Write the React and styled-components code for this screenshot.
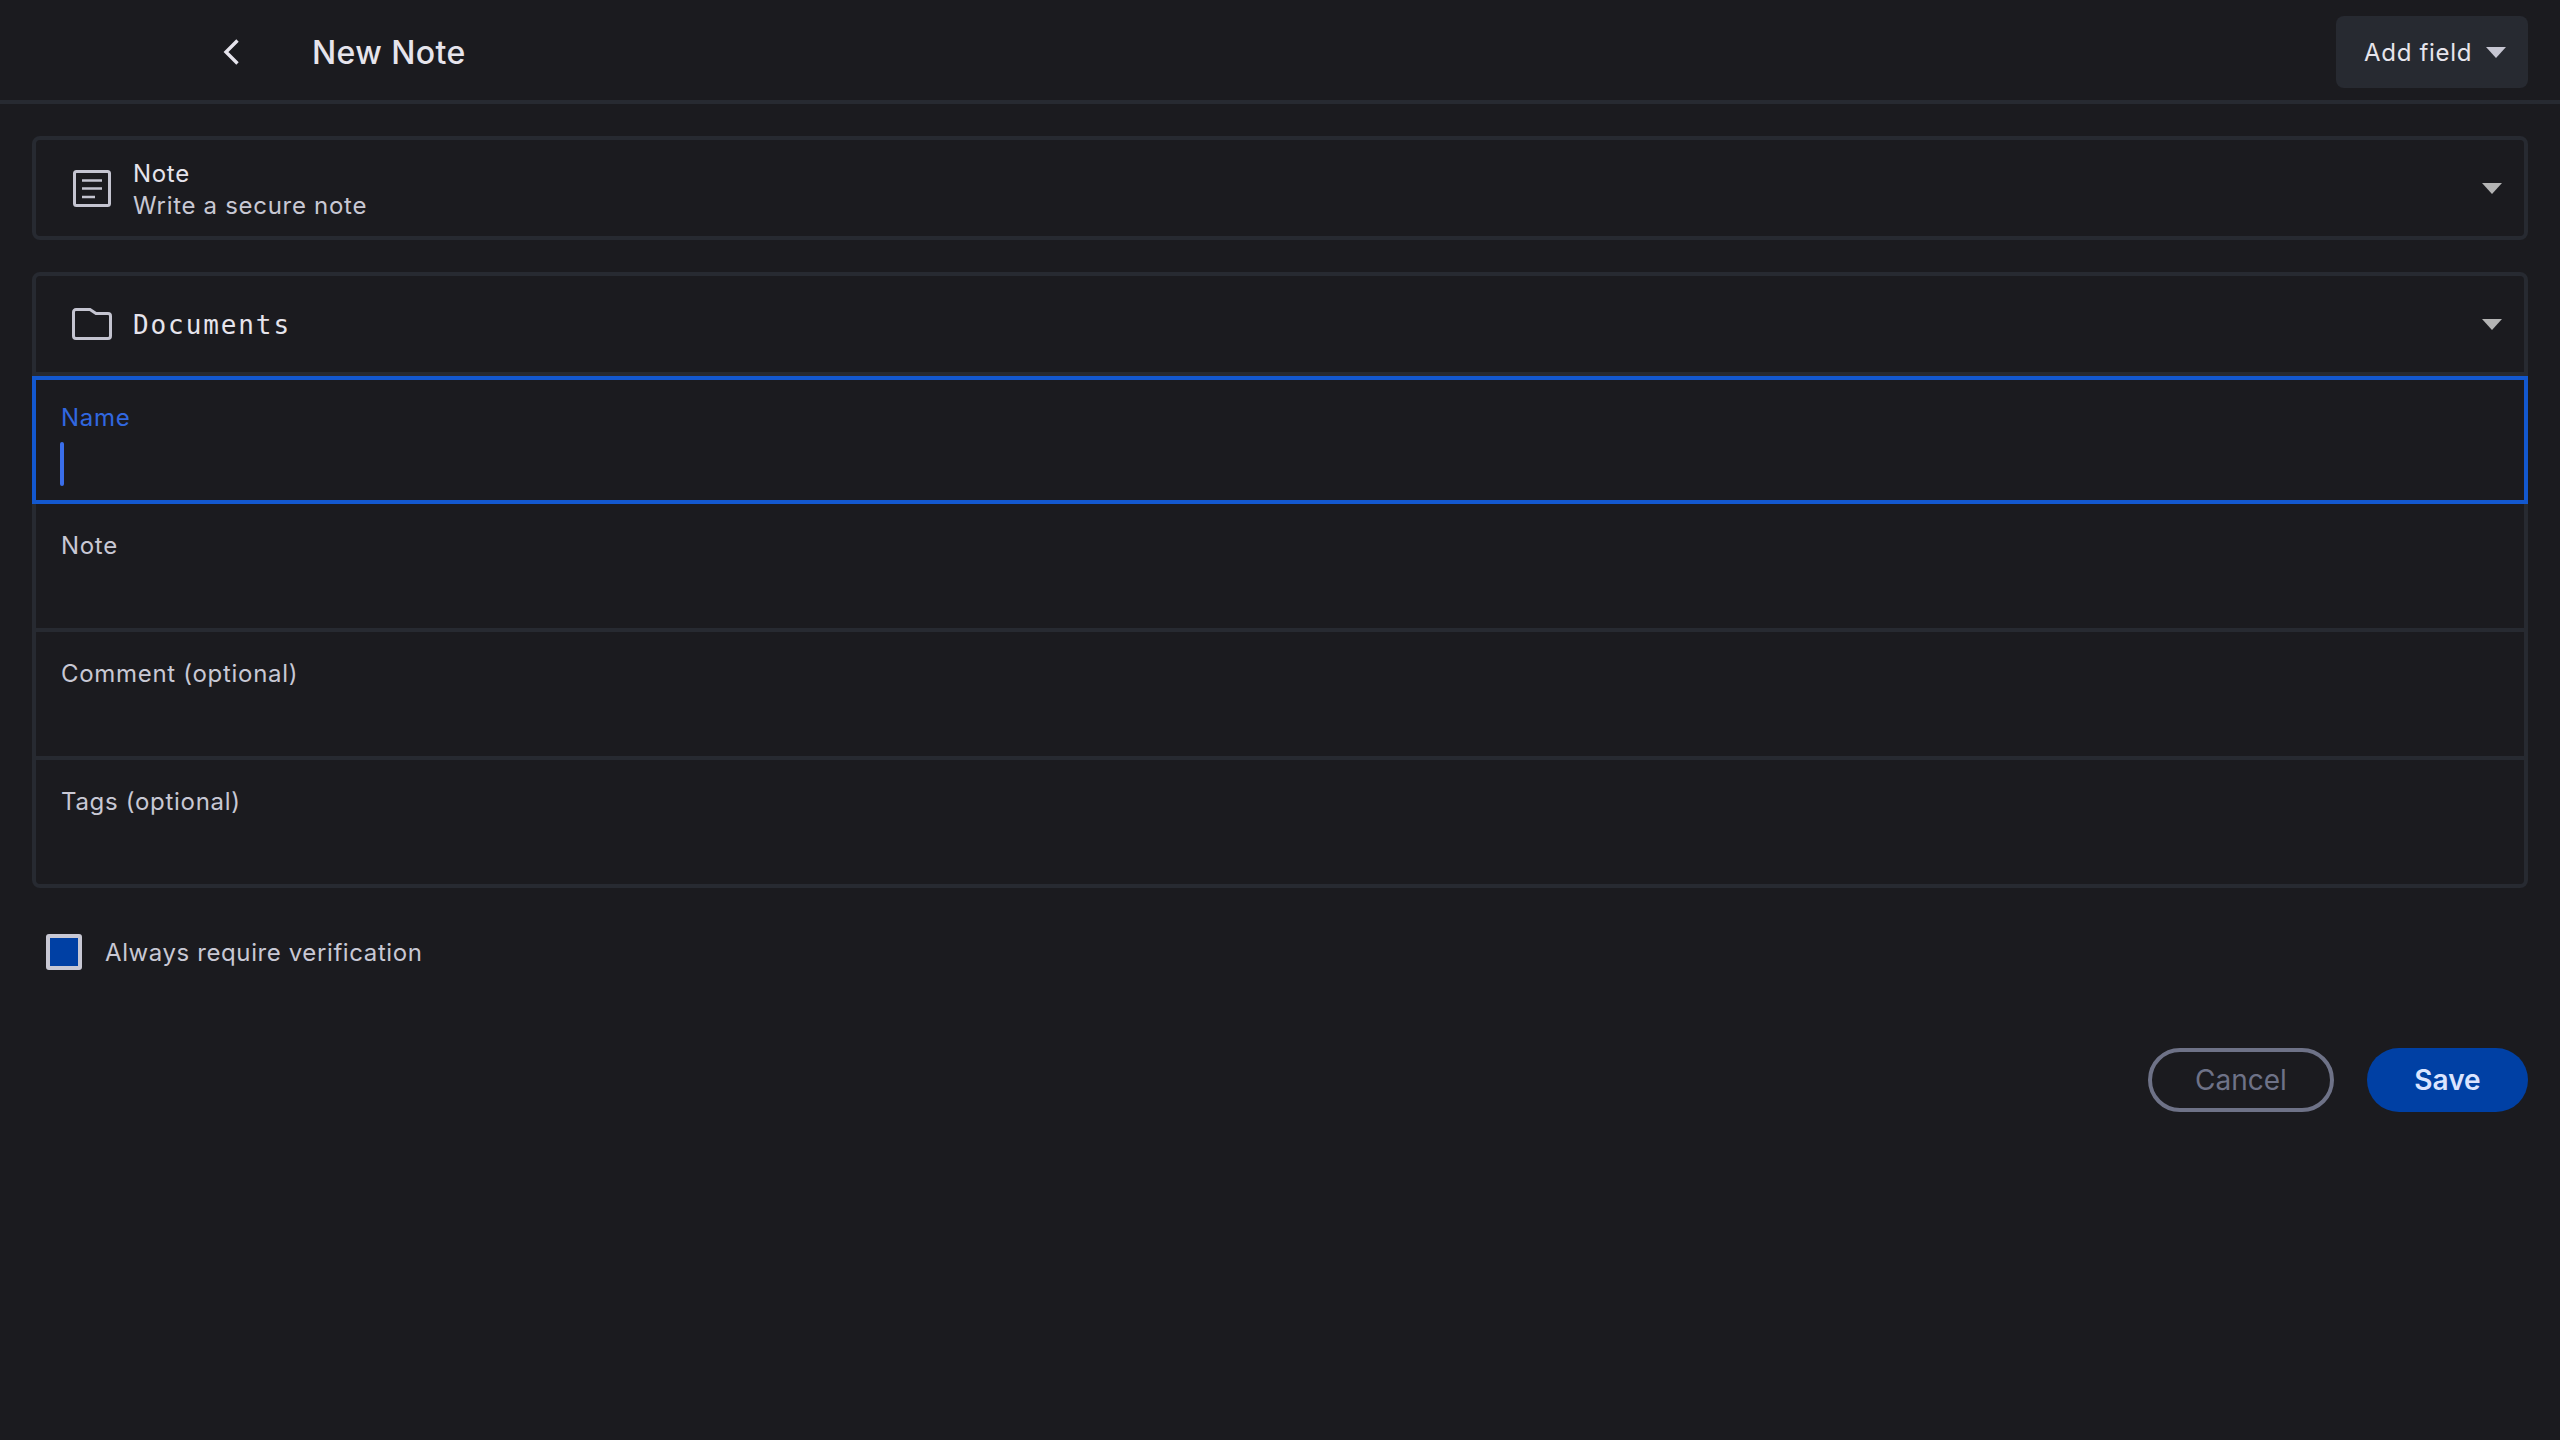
import React from 'react'
import styled, { createGlobalStyle } from 'styled-components'

const GlobalStyle = createGlobalStyle`
  html, body {
    margin: 0;
    padding: 0;
    background: #1b1b1f;
  }
  * {
    box-sizing: border-box;
  }
`

const FIELDS = ['Note', 'Comment (optional)', 'Tags (optional)']

const Caret = ({ color }) => (
  <CaretSvg viewBox="0 0 20 11">
    <path d="M0 0H20L10 11Z" fill={color} />
  </CaretSvg>
)

const App = () => (
  <Page>
    <GlobalStyle />
    <Header>
      <BackButton>
        <svg width="16" height="26" viewBox="0 0 16 26" fill="none">
          <path d="M14.500 1.500L3 13L14.500 24.500" stroke="#e6e4ec" strokeWidth="3.4" />
        </svg>
      </BackButton>
      <Title>New Note</Title>
      <AddField>
        Add field
        <Caret color="#c6c6d2" />
      </AddField>
    </Header>

    <Content>
      <Panel>
        <SelectRow>
          <IconSlot>
            <svg width="38" height="37" viewBox="0 0 38 37" fill="none" stroke="#c4c4d0">
              <rect x="1.500" y="1.500" width="35" height="34" rx="2" strokeWidth="3" />
              <path d="M9 10.500H29M9 18.500H29M9 27H22" strokeWidth="2.6" />
            </svg>
          </IconSlot>
          <SelectText>
            <SelectTitle>Note</SelectTitle>
            <SelectSub>Write a secure note</SelectSub>
          </SelectText>
          <Caret color="#b4b4b4" />
        </SelectRow>
      </Panel>

      <Panel>
        <SelectRow divided>
          <IconSlot>
            <svg width="40" height="32" viewBox="0 0 40 32" fill="none" stroke="#c4c4d0">
              <path
                d="M1.500 4A2.500 2.500 0 0 1 4 1.500H18L24 5.500H36A2.500 2.500 0 0 1 38.500 8V28A2.500 2.500 0 0 1 36 30.500H4A2.500 2.500 0 0 1 1.500 28Z"
                strokeWidth="3"
              />
            </svg>
          </IconSlot>
          <FolderName>Documents</FolderName>
          <Caret color="#b4b4b4" />
        </SelectRow>
        <ActiveField>
          <FieldLabel active>Name</FieldLabel>
          <TextCursor />
        </ActiveField>
        {FIELDS.map(label => (
          <Field key={label}>
            <FieldLabel>{label}</FieldLabel>
          </Field>
        ))}
      </Panel>

      <CheckRow>
        <CheckBox />
        <CheckLabel>Always require verification</CheckLabel>
      </CheckRow>

      <Actions>
        <CancelButton>Cancel</CancelButton>
        <SaveButton>Save</SaveButton>
      </Actions>
    </Content>
  </Page>
)

const Page = styled.div`
  min-height: 1440px;
  background: #1b1b1f;
  font-family: Inter, 'Liberation Sans', sans-serif;
`
const Header = styled.header`
  display: flex;
  align-items: center;
  height: 104px;
  padding: 4px 32px 0 223px;
  border-bottom: 4px solid #272a31;
`
const BackButton = styled.div`
  display: flex;
  width: 89px;
`
const Title = styled.h1`
  flex: 1;
  margin: 0;
  padding-top: 2px;
  font-size: 32px;
  letter-spacing: 0.4px;
  line-height: 40px;
  font-weight: 500;
  color: #e6e4ec;
`
const AddField = styled.div`
  display: flex;
  align-items: center;
  justify-content: space-between;
  width: 192px;
  height: 72px;
  padding: 0 22px 0 28px;
  border-radius: 8px;
  background: #272a31;
  color: #e6e4ec;
  font-size: 24px;
  letter-spacing: 0.7px;
`
const CaretSvg = styled.svg`
  flex: none;
  width: 20px;
  height: 11px;
`
const Content = styled.main`
  display: flex;
  flex-direction: column;
  padding: 32px 32px 0;
  gap: 32px;
`
const Panel = styled.section`
  border: 4px solid #272a31;
  border-radius: 8px;
`
const SelectRow = styled.div`
  display: flex;
  align-items: center;
  height: ${({ divided }) => (divided ? '100px' : '96px')};
  padding: 0 22px 0 36px;
  border-bottom: ${({ divided }) => (divided ? '4px solid #272a31' : '0')};
`
const IconSlot = styled.div`
  display: flex;
  justify-content: center;
  width: 40px;
  margin-right: 21px;
`
const SelectText = styled.div`
  flex: 1;
  display: flex;
  flex-direction: column;
  padding-top: 3px;
`
const SelectTitle = styled.div`
  font-size: 24px;
  letter-spacing: 0.7px;
  line-height: 32px;
  white-space: nowrap;
  color: #e6e4ec;
`
const SelectSub = styled(SelectTitle)`
  color: #c8c8d4;
`
const FolderName = styled.div`
  flex: 1;
  padding-top: 1px;
  font-family: 'DejaVu Sans Mono', 'Liberation Mono', monospace;
  font-size: 26px;
  letter-spacing: 1.9px;
  line-height: 32px;
  color: #e6e4ec;
`
const Field = styled.div`
  height: 128px;
  padding: 26px 25px 0;
  border-bottom: 4px solid #272a31;
  &:last-child {
    height: 124px;
    border-bottom: 0;
  }
`
const ActiveField = styled.div`
  height: 128px;
  margin: 0 -4px;
  padding: 22px 25px 0;
  border: 4px solid #1358cf;
`
const FieldLabel = styled.div`
  height: 32px;
  font-size: 24px;
  letter-spacing: 0.7px;
  line-height: 32px;
  color: ${({ active }) => (active ? '#3168e0' : '#c8c8d4')};
`
const TextCursor = styled.div`
  width: 4px;
  height: 44px;
  margin-top: 8px;
  margin-left: -1px;
  border-radius: 2px;
  background: #3a6eea;
`
const CheckRow = styled.label`
  display: flex;
  align-items: center;
  gap: 23px;
  margin-top: 14px;
  padding-left: 14px;
`
const CheckBox = styled.span`
  width: 36px;
  height: 36px;
  border: 4px solid #c8c8d4;
  border-radius: 3px;
  background: #0040a4;
`
const CheckLabel = styled.span`
  padding-top: 2px;
  font-size: 24px;
  letter-spacing: 0.6px;
  line-height: 32px;
  color: #c8c8d4;
`
const Actions = styled.div`
  display: flex;
  justify-content: flex-end;
  gap: 33px;
  margin-top: 46px;
`
const PillButton = styled.button`
  height: 64px;
  border-radius: 32px;
  font-family: Inter, 'Liberation Sans', sans-serif;
  font-size: 28px;
`
const CancelButton = styled(PillButton)`
  width: 186px;
  border: 4px solid #6e7287;
  background: transparent;
  color: #6e7287;
`
const SaveButton = styled(PillButton)`
  width: 161px;
  border: 0;
  background: #0040a4;
  color: #dbe4ff;
  font-weight: 600;
`

export default App
